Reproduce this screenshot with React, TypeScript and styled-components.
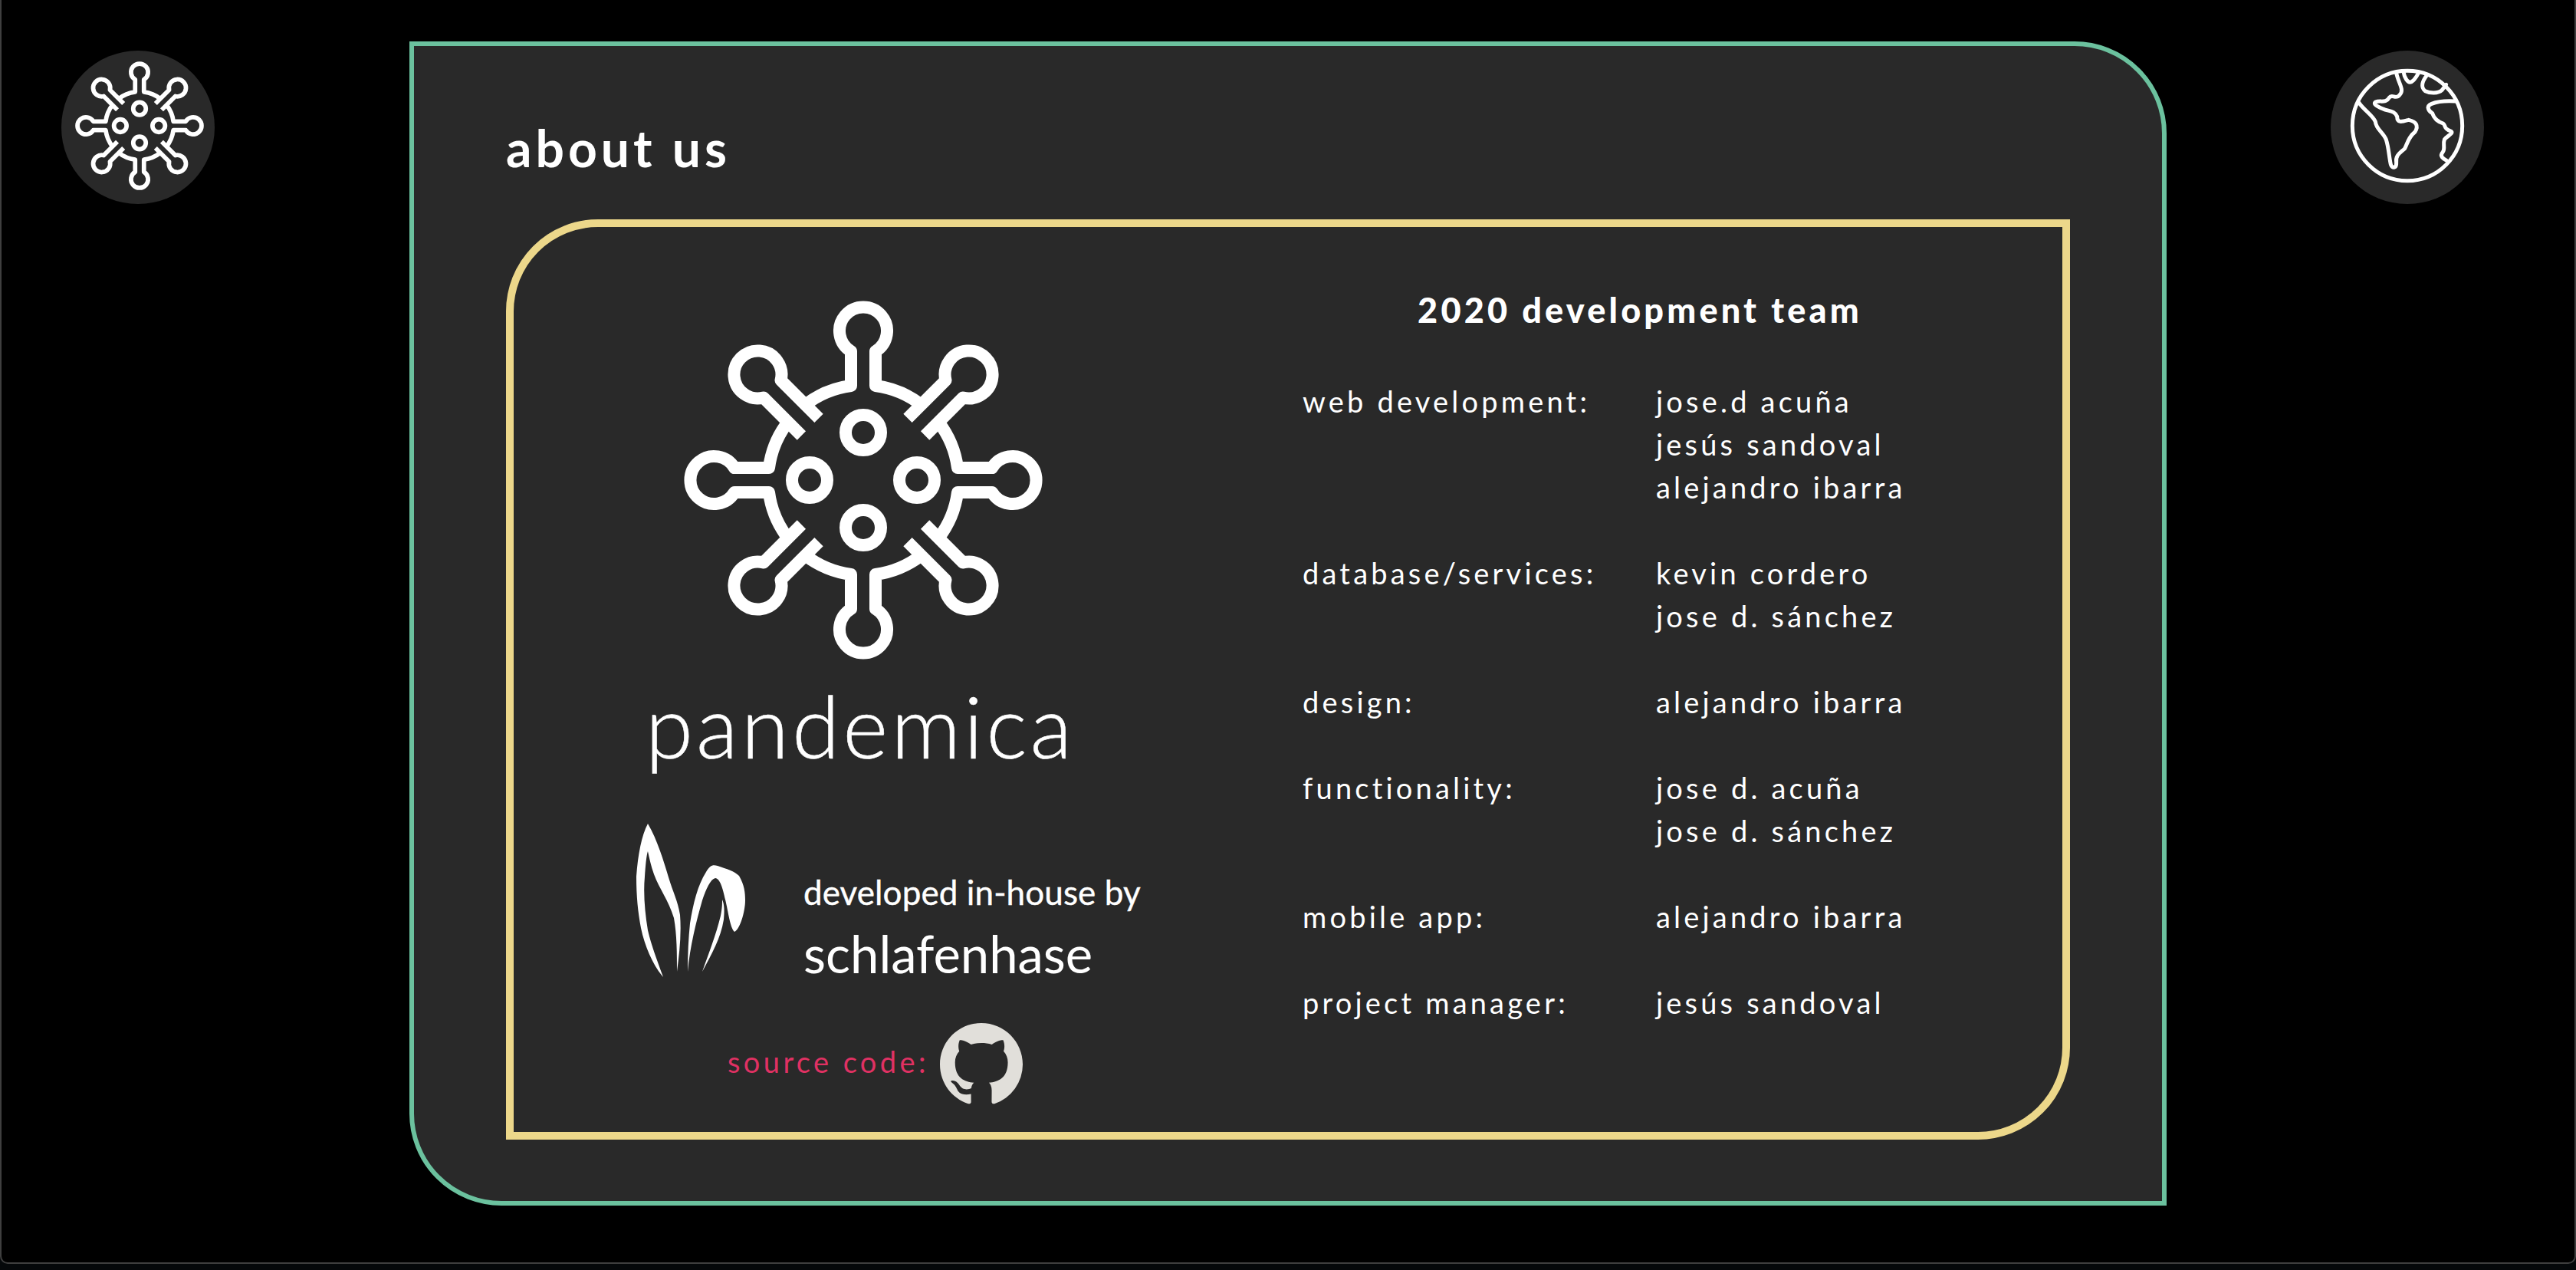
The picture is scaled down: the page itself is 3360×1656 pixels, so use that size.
import React, { FC } from 'react';
import styled, { createGlobalStyle } from 'styled-components';
import { BsGithub } from 'react-icons/bs';

const GlobalStyle = createGlobalStyle`
  html, body {
    margin: 0;
    background: #05080a;
  }
  body {
    font-family: Lato, "Open Sans", sans-serif;
    color: #fff;
  }
`;

const Page = styled.div`
  box-sizing: border-box;
  height: 1656px;
  padding-bottom: 8px;
  overflow: hidden;
`;

const Screen = styled.div`
  display: flex;
  align-items: flex-start;
  box-sizing: border-box;
  height: 100%;
  padding: 54px 118px 0 78px;
  border: 2px solid #3f3f3f;
  border-top: none;
  border-radius: 0 0 10px 10px;
  background: #000;
`;

const RoundIcon = styled.a<{ $right?: boolean }>`
  display: flex;
  flex: none;
  align-items: center;
  justify-content: center;
  box-sizing: border-box;
  width: 200px;
  height: 200px;
  margin-top: 12px;
  margin-left: ${(p) => (p.$right ? '214px' : '0')};
  margin-right: ${(p) => (p.$right ? '0' : '254px')};
  padding: ${(p) => (p.$right ? '0 0 5px' : '0 0 4px 3px')};
  border-radius: 50%;
  background: #292929;
`;

const Panel = styled.main`
  flex: none;
  box-sizing: border-box;
  width: 2292px;
  height: 1518px;
  padding: 0 120px 80px;
  border: 6px solid #6bc19e;
  border-radius: 0 120px 0 120px;
  background: #292929;
`;

const PanelTitle = styled.h1`
  box-sizing: border-box;
  height: 226px;
  margin: 0;
  padding-top: 93px;
  font-size: 66px;
  font-weight: 700;
  line-height: 80px;
  letter-spacing: 5px;
`;

const Frame = styled.section`
  display: flex;
  box-sizing: border-box;
  height: 1200px;
  border: 10px solid #ecd78a;
  border-radius: 120px 0 120px 0;
`;

const Brand = styled.div`
  display: flex;
  flex: none;
  flex-direction: column;
  width: 912px;
  margin-right: 117px;
  padding-top: 96px;
`;

const BigVirus = styled.div`
  display: flex;
  justify-content: center;
`;

const Wordmark = styled.div`
  margin-top: 20px;
  font-size: 113px;
  font-weight: 300;
  line-height: 130px;
  letter-spacing: 4px;
  text-align: center;
  text-indent: -8px;
  -webkit-text-stroke: 0.6px #fff;
`;

const Credit = styled.div`
  display: flex;
  align-items: center;
  gap: 75px;
  margin: 58px 0 0 160px;
`;

const CreditText = styled.div`
  display: flex;
  flex-direction: column;
  padding-top: 68px;
`;

const CreditLine = styled.span`
  font-size: 44px;
  font-weight: 400;
  line-height: 54px;
  letter-spacing: 0.1px;
  -webkit-text-stroke: 0.4px #fff;
`;

const CreditName = styled.span`
  margin-top: 16px;
  font-size: 67px;
  font-weight: 400;
  line-height: 74px;
`;

const Source = styled.div`
  display: flex;
  align-items: center;
  gap: 14px;
  margin: 50px 0 0 279px;
  color: #e03163;
  font-size: 38px;
  line-height: 108px;
  font-weight: 400;
  letter-spacing: 4.4px;
`;

const SourceLabel = styled.span`
  padding-bottom: 8px;
`;

const GithubLink = styled.a`
  display: flex;
  color: #e1dfda;
`;

const Team = styled.div`
  width: 880px;
  padding-top: 78px;
`;

const TeamTitle = styled.h2`
  margin: 0 0 61px;
  font-size: 45px;
  font-weight: 900;
  line-height: 60px;
  letter-spacing: 4.2px;
  text-align: center;
`;

const Roles = styled.dl`
  display: grid;
  grid-template-columns: 461px 1fr;
  row-gap: 56px;
  margin: 0;
  font-size: 38px;
  font-weight: 400;
  line-height: 56px;
  letter-spacing: 4.2px;
`;

const RoleName = styled.dt`
  margin: 0;
`;

const RoleMembers = styled.dd`
  display: flex;
  flex-direction: column;
  margin: 0;
`;

const crown =
  'M-75.7 -98.2A124 124 0 0 1 -16 -123V-168A31 31 0 1 1 16 -168V-123A124 124 0 0 1 75.7 -98.2';
const stalk = 'M-16 -98V-168A31 31 0 1 1 16 -168V-98';

const VirusIcon: FC<{ size: number }> = ({ size }) => (
  <svg width={size} height={size} viewBox="-234 -234 468 468" fill="none" stroke="#fff" strokeWidth={16} strokeLinejoin="round">
    {[0, 90, 180, 270].map((a) => (
      <path key={a} d={crown} transform={`rotate(${a})`} />
    ))}
    {[45, 135, 225, 315].map((a) => (
      <path key={a} d={stalk} transform={`rotate(${a})`} />
    ))}
    <circle cx={0} cy={-62} r={23} />
    <circle cx={0} cy={62} r={23} />
    <circle cx={-70} cy={0} r={23} />
    <circle cx={70} cy={0} r={23} />
  </svg>
);

const GlobeIcon: FC = () => (
  <svg width={156} height={156} viewBox="246 167 468 468" fill="none" stroke="#fff" strokeWidth={15} strokeLinecap="round" strokeLinejoin="round">
    <circle cx={480} cy={401} r={215} />
    <path d="M290 310C310 340 345 360 355 385C358 415 385 425 397 455C408 490 408 520 415 552C422 572 438 565 437 545C432 515 455 505 470 490C482 465 485 445 510 425C525 400 515 385 485 378C460 385 440 392 440 365C430 340 405 345 385 335C360 325 345 315 355 308C375 300 395 315 410 290C420 275 435 300 450 280C470 260 445 235 437 195" />
    <path d="M465 190C468 210 480 235 495 230C505 225 518 205 525 192" />
    <path d="M555 205C540 225 530 250 550 265C570 275 600 275 615 262L632 240" />
    <path d="M668 305C635 303 600 305 575 315C550 325 565 345 578 352C585 375 600 385 620 392C632 400 620 412 650 422C665 430 635 440 625 455C618 475 630 490 618 505C605 520 620 530 635 538" />
  </svg>
);

const EarsIcon: FC = () => (
  <svg width={143} height={200} viewBox="0 0 143 200" fill="#fff">
    <path d="M15 0C7 15 2 40 0 69C0 95 2 115 6 136C11 160 22 185 35 200C26 175 20 160 15 139C11 115 9 90 11 69C12 55 13 42 15 36C17 45 19 55 23 66C30 85 42 100 49 123C53 145 53 170 53 193C56 170 59 145 57 119C54 100 48 90 42 70C36 50 27 20 15 0Z" />
    <path d="M67 193C67 170 68 149 70 130C74 105 80 80 91 63C96 54 100 53 106 55C118 59 128 62 134 68C141 80 142 90 142 100C142 115 135 138 128 141C122 135 120 115 116 99C113 85 109 71 103 71C97 72 91 85 86 100C78 128 70 160 67 193Z" />
    <path d="M86 193C94 170 104 145 110 120C112 110 112 105 112 99C115 105 115 115 114 125C110 150 98 170 86 193Z" />
  </svg>
);

const roles: { name: string; members: string[] }[] = [
  { name: 'web development:', members: ['jose.d acuña', 'jesús sandoval', 'alejandro ibarra'] },
  { name: 'database/services:', members: ['kevin cordero', 'jose d. sánchez'] },
  { name: 'design:', members: ['alejandro ibarra'] },
  { name: 'functionality:', members: ['jose d. acuña', 'jose d. sánchez'] },
  { name: 'mobile app:', members: ['alejandro ibarra'] },
  { name: 'project manager:', members: ['jesús sandoval'] },
];

const App: FC = () => {
  return (
    <Page>
      <GlobalStyle />
      <Screen>
        <RoundIcon>
          <VirusIcon size={168} />
        </RoundIcon>
        <Panel>
          <PanelTitle>about us</PanelTitle>
          <Frame>
            <Brand>
              <BigVirus>
                <VirusIcon size={468} />
              </BigVirus>
              <Wordmark>pandemica</Wordmark>
              <Credit>
                <EarsIcon />
                <CreditText>
                  <CreditLine>developed in-house by</CreditLine>
                  <CreditName>schlafenhase</CreditName>
                </CreditText>
              </Credit>
              <Source>
                <SourceLabel>source code:</SourceLabel>
                <GithubLink>
                  <BsGithub size={108} />
                </GithubLink>
              </Source>
            </Brand>
            <Team>
              <TeamTitle>2020 development team</TeamTitle>
              <Roles>
                {roles.map((role) => (
                  <React.Fragment key={role.name}>
                    <RoleName>{role.name}</RoleName>
                    <RoleMembers>
                      {role.members.map((m) => (
                        <span key={m}>{m}</span>
                      ))}
                    </RoleMembers>
                  </React.Fragment>
                ))}
              </Roles>
            </Team>
          </Frame>
        </Panel>
        <RoundIcon $right>
          <GlobeIcon />
        </RoundIcon>
      </Screen>
    </Page>
  );
};

export default App;
